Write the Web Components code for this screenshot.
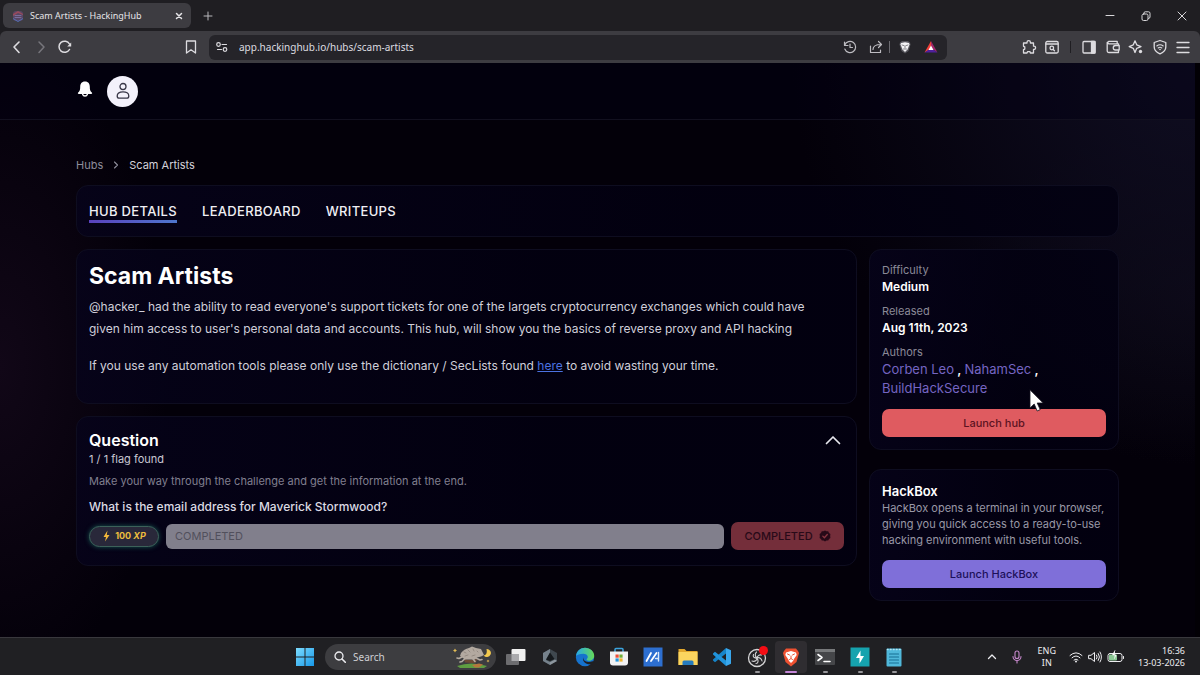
<!DOCTYPE html>
<html lang="en">
<head>
<meta charset="utf-8">
<meta name="viewport" content="width=device-width, initial-scale=1">
<title>Scam Artists - HackingHub</title>
<style>
  html { height: 100%; background: #020009; }
  body { margin: 0; min-height: 100%; display: flex; flex-direction: column; font-family: Inter, sans-serif; font-size: 13px; color: #fff; }
  hub-page { flex: 1; }
</style>
</head>
<body>
<window-tabs></window-tabs>
<window-toolbar></window-toolbar>
<hub-page>
  <site-header slot="header"></site-header>
  <crumb-trail></crumb-trail>
  <hub-tabs></hub-tabs>
  <hub-columns>
    <hub-intro></hub-intro>
    <hub-question></hub-question>
    <hub-facts slot="side"></hub-facts>
    <hack-box slot="side"></hack-box>
  </hub-columns>
</hub-page>
<task-bar></task-bar>

<script>
const base = `
  :host, *, *::before, *::after { box-sizing: border-box; }
  button { font: inherit; color: inherit; background: none; border: 0; padding: 0; margin: 0; display: inline-flex; align-items: center; justify-content: center; }
  h1, h2, p, dl, dd, ol { margin: 0; padding: 0; }
  a { color: inherit; text-decoration: none; }
  svg { display: block; fill: none; stroke-linecap: round; stroke-linejoin: round; flex: none; }
  svg:not([stroke]) { stroke: currentColor; }
  svg:not([stroke-width]) { stroke-width: 1.3; }
`;
function define(name, css, html) {
  const template = document.createElement('template');
  template.innerHTML = `<style>${base}${css}</style>${html}`;
  customElements.define(name, class extends HTMLElement {
    constructor() {
      super();
      this.attachShadow({ mode: 'open' }).append(template.content.cloneNode(true));
    }
  });
}

define('window-tabs', `
  :host { display: flex; height: 31px; background: #1f1e22; padding: 3px 12px 0 3px; align-items: flex-start; color: #e6e5e8; font: 9px/14px "Noto Sans", sans-serif; }
  .tab { display: flex; align-items: center; width: 188px; height: 25px; border-radius: 6px; background: #3d3c41; padding: 0 8px 0 9px; gap: 6px; }
  .tab span { flex: 1; white-space: nowrap; }
  .add { width: 34px; height: 25px; color: #b9b8bc; }
  .controls { margin-left: auto; display: flex; gap: 24px; height: 25px; align-items: center; color: #d8d7da; }
  .controls svg { stroke-width: 1; }
`, `
  <div class="tab">
    <svg width="12" height="12" viewBox="0 0 12 12" stroke="none"><rect x="1" y="1" width="10" height="10" rx="3" fill="#584664"/><path d="M1 4 6 1l5 3v1L6 3 1 6z" fill="#984a5c"/><path d="M1 8l5 3 5-3v1l-5 3-5-3z" fill="#5270b8"/><path d="M3 5.500h6M3 7.500h6" stroke="#7a6d9c" stroke-width="1"/></svg>
    <span>Scam Artists - HackingHub</span>
    <button aria-label="Close tab"><svg width="8" height="8" viewBox="0 0 8 8" stroke-width="1.500"><path d="M1.500 1.500l5 5m0-5l-5 5"/></svg></button>
  </div>
  <button class="add" aria-label="New tab"><svg width="10" height="10" viewBox="0 0 10 10" stroke-width="1"><path d="M5 1v8M1 5h8"/></svg></button>
  <div class="controls">
    <button aria-label="Minimize"><svg width="12" height="12" viewBox="0 0 12 12"><path d="M2 5.500h8"/></svg></button>
    <button aria-label="Restore"><svg width="12" height="12" viewBox="0 0 12 12"><rect x="2" y="4" width="6" height="6.500" rx="1.500"/><path d="M4 3.500V3q0-1.200 1.200-1.200H8.500Q10 1.800 10 3.300V7q0 1.500-1.500 1.500"/></svg></button>
    <button aria-label="Close"><svg width="12" height="12" viewBox="0 0 12 12"><path d="M2 2l8 8M10 2l-8 8"/></svg></button>
  </div>
`);

define('window-toolbar', `
  :host { display: block; background: #1f1e22; color: #dddce0; font: 10px/16px "Noto Sans", sans-serif; }
  .bar { display: flex; align-items: center; height: 32px; background: #3d3c41; border-radius: 6px 6px 0 0; padding: 0 9px; }
  .nav { display: flex; gap: 8px; width: 64px; }
  .dim { color: #77767c; }
  .mark { margin-left: 110px; }
  .url { flex: 1; min-width: 0; display: flex; align-items: center; height: 25px; margin-left: 10px; border-radius: 6px; background: #252429; padding: 0 8px 0 5px; }
  .url input { flex: 1; min-width: 0; background: none; border: 0; padding: 0; margin-left: 9px; color: #dddce0; font: inherit; outline: 0; }
  .tools { display: flex; align-items: center; gap: 10px; }
  .tools i { width: 1px; height: 12px; background: #6b6a70; margin: 0 -3px 0 -5px; }
  .tools button { color: #bdbcc1; }
  .brave { margin-left: 74px; display: flex; gap: 7px; }
  .split { width: 1px; height: 12px; background: #1f1e22; margin: 0 10px; }
  .side { display: flex; width: 110px; justify-content: space-between; }
`, `
  <div class="bar">
    <div class="nav">
      <button aria-label="Back"><svg width="16" height="16" viewBox="0 0 16 16" stroke-width="1.600"><path d="M10 3L5 8l5 5.500"/></svg></button>
      <button class="dim" aria-label="Forward"><svg width="16" height="16" viewBox="0 0 16 16" stroke-width="1.500"><path d="M6 3l5 5-5 5.500"/></svg></button>
      <button aria-label="Reload"><svg width="16" height="16" viewBox="0 0 16 16" stroke-width="1.500"><path d="M12.500 5A5.600 5.600 0 1 0 12.500 10.500"/><path d="M14.200 3.500v4H10.200z" fill="currentColor" stroke="none"/></svg></button>
    </div>
    <button class="mark" aria-label="Bookmark"><svg width="16" height="16" viewBox="0 0 16 16"><path d="M3.500 2h9v12L8 10.800 3.500 14z"/></svg></button>
    <div class="url">
      <button aria-label="Site settings"><svg width="16" height="16" viewBox="0 0 16 16" stroke-width="1.200"><circle cx="4.500" cy="5.500" r="1.800"/><path d="M8 5.500h4.500M3.500 10.500h4"/><circle cx="11" cy="10.500" r="1.800"/></svg></button>
      <input aria-label="Address" value="app.hackinghub.io/hubs/scam-artists">
      <div class="tools">
        <button aria-label="History"><svg width="16" height="16" viewBox="0 0 16 16" stroke-width="1.200"><path d="M2.800 6A5.600 5.600 0 1 1 2.800 10M2.500 3v3.500H6M8 5v3.500h2.500"/></svg></button>
        <button aria-label="Share"><svg width="16" height="16" viewBox="0 0 16 16" stroke-width="1.200"><path d="M2.500 7v6.500h10V11M5 10.500c0-4 3-5 8-5M10.500 2.500l3 3-3 3"/></svg></button>
        <i></i>
        <button aria-label="Shields"><svg width="16" height="16" viewBox="0 0 16 16" stroke="none"><path d="M3 3.500L5 2h6l2 1.500.5 2L11.500 12 8 14.500 4.500 12 2.500 5.500z" fill="#57565d"/><path d="M4 4l4-.8L12 4l.5 1.500-2 5L8 13l-2.500-2.500-2-5z" fill="#f4f3f6"/><path d="M5 6l2 .6M11 6l-2 .6M8 7v2M6.500 10h3" stroke="#77767c" stroke-width=".9"/></svg></button>
        <button aria-label="Rewards"><svg width="16" height="16" viewBox="0 0 16 16" stroke="none"><path d="M8 2L1.500 13.500 8 10z" fill="#f04038"/><path d="M8 2l6.500 11.500L8 9z" fill="#a22769"/><path d="M1.500 13.500h13L8 9z" fill="#50209c"/><path d="M8 6.500l2.500 4.500h-5z" fill="#fff"/></svg></button>
      </div>
    </div>
    <div class="brave">
      <button aria-label="Extensions"><svg width="16" height="16" viewBox="0 0 16 16"><path d="M2.500 4H6V3.300a1.700 1.700 0 0 1 3.400 0V4h3.100v3.200h.5a1.600 1.600 0 0 1 0 3.200h-.5V14H9.400l-.4-1.300H6.500L6 14H2.500v-3.300l1.300-.6V7.900l-1.300-.6z"/></svg></button>
      <button aria-label="Find in page"><svg width="16" height="16" viewBox="0 0 16 16"><rect x="1.800" y="2.500" width="12.400" height="11.500" rx="1.500"/><path d="M2 5h12"/><circle cx="7.800" cy="9" r="1.800"/><path d="M9.200 10.500l1.300 1.300"/></svg></button>
    </div>
    <div class="split"></div>
    <div class="side">
      <button aria-label="Sidebar"><svg width="16" height="16" viewBox="0 0 16 16"><rect x="2" y="2.500" width="12" height="11.500" rx="1"/><path d="M10.500 2.500H14V14h-3.500z" fill="currentColor"/></svg></button>
      <button aria-label="Wallet"><svg width="16" height="16" viewBox="0 0 16 16"><path d="M13.500 6V4.800H3.800a1.300 1.300 0 0 1 0-2.500h8.400v2.500M2.200 3.500V12q0 1.500 1.500 1.500h9.800v-2"/><path d="M14.200 6.500H10.500a2.200 2.200 0 0 0 0 4.500h3.700z"/></svg></button>
      <button aria-label="Leo"><svg width="16" height="16" viewBox="0 0 16 16"><path d="M7 1.800l1.700 4L13 7.600 8.700 9.300 7 13.500 5.300 9.300 1.200 7.600l4.100-1.800z"/><circle cx="12.500" cy="12.500" r="1.700" fill="currentColor" stroke="none"/></svg></button>
      <button aria-label="VPN"><svg width="16" height="16" viewBox="0 0 16 16"><path d="M8 1.500l5.800 2V8c0 3-2.500 5.500-5.800 6.800C4.700 13.500 2.200 11 2.200 8V3.500z"/><path d="M4.800 7q3.200-2.500 6.400 0M6.200 9q1.800-1.400 3.600 0" stroke-width="1.100"/><circle cx="8" cy="10.500" r=".8" fill="currentColor" stroke="none"/></svg></button>
      <button aria-label="Menu"><svg width="16" height="16" viewBox="0 0 16 16"><path d="M2 3.500h12M2 8.500h12M2 13.500h12"/></svg></button>
    </div>
  </div>
`);

define('hub-page', `
  :host { display: block; padding-right: 5px; background:
      linear-gradient(90deg, transparent calc(100% - 5px), #020005 calc(100% - 5px)),
      radial-gradient(ellipse 14% 56% at 0 53%, #110717, #11071700),
      radial-gradient(ellipse 34% 70% at 100% 0, #100e22, #100e2200),
      radial-gradient(ellipse 20% 30% at 100% 40%, #0a0712, #0a071200),
      #030009; }
  main { padding: 36px 76px; }
`, `<slot name="header"></slot><main><slot></slot></main>`);

define('site-header', `
  :host { display: flex; align-items: center; gap: 13px; height: 57px; padding: 0 76px; border-bottom: 1px solid #12101f; background: #02001466; }
  button:last-child { width: 31px; height: 31px; border-radius: 50%; background: #f3f1fb; color: #393748; }
`, `
  <button aria-label="Notifications"><svg width="18" height="20" viewBox="0 1 18 20" stroke="none"><path d="M9 1.500C5.500 1.500 4.200 4 4.200 6.800c0 3-.4 4.500-2 5.700-.7.700-.3 1.500.6 1.500h12.400c.9 0 1.300-.8.6-1.500-1.600-1.200-2-2.700-2-5.700C13.800 4 12.500 1.500 9 1.500z" fill="#fff"/><path d="M6.600 14.200a2.500 2.500 0 0 0 4.800 0" stroke="#fff" stroke-width="1.300"/></svg></button>
  <button aria-label="Account"><svg width="16" height="18" viewBox="0 0 16 18"><circle cx="8" cy="4.500" r="3"/><path d="M2.200 14c0-3 2.500-4.200 5.800-4.200s5.800 1.200 5.800 4.200c0 1.500-.8 2.200-2 2.200H4.200c-1.200 0-2-.7-2-2.200z"/></svg></button>
`);

define('crumb-trail', `
  :host { display: block; font-size: 11px; line-height: 18px; color: #8e8d9b; margin-bottom: 11px; }
  ol { display: flex; align-items: center; list-style: none; gap: 10px; }
  [aria-current] { color: #d3d2da; }
`, `
  <nav aria-label="Breadcrumb"><ol>
    <li><a href="#hubs">Hubs</a></li>
    <li aria-hidden="true"><svg width="6" height="8" viewBox="0 0 6 8" stroke-width="1.100"><path d="M1.500 1L4.500 4l-3 3"/></svg></li>
    <li aria-current="page">Scam Artists</li>
  </ol></nav>
`);

define('glass-card', `
  :host { display: block; border: 1px solid #0e0d20; border-radius: 12px; padding: 12px; background: linear-gradient(90deg, #06031bcc, #020011cc 60%); }
`, `<slot></slot>`);

define('hub-tabs', `
  :host { display: block; margin-bottom: 12px; }
  nav { display: flex; gap: 25px; height: 26px; align-items: center; font-size: 13px; line-height: 18px; font-weight: 500; letter-spacing: 0.025em; color: #f0eff4; }
  a { border-bottom: 3px solid transparent; margin-top: 3px; }
  a[aria-current] { border-image: linear-gradient(90deg, #5a41bd, #4e77cd) 1; }
`, `<glass-card><nav aria-label="Hub sections">
  <a href="#details" aria-current="page">HUB DETAILS</a><a href="#leaderboard">LEADERBOARD</a><a href="#writeups">WRITEUPS</a>
</nav></glass-card>`);

define('hub-columns', `
  :host { display: grid; grid-template-columns: minmax(0, 1fr) 250px; gap: 12px; align-items: start; }
  section { display: grid; gap: 12px; }
  aside { display: grid; gap: 19px; }
`, `<section><slot></slot></section><aside><slot name="side"></slot></aside>`);

define('hub-intro', `
  :host { display: block; }
  h1 { font-size: 23px; line-height: 28px; font-weight: 700; margin-bottom: 6px; }
  p { max-width: 740px; font-size: 12px; line-height: 22px; color: #d0cfda; }
  p + p { margin: 15px 0 14px; }
  a { color: #4b72e0; text-decoration: underline; }
`, `<glass-card>
  <h1>Scam Artists</h1>
  <p>@hacker_ had the ability to read everyone's support tickets for one of the largets cryptocurrency exchanges which could have given him access to user's personal data and accounts. This hub, will show you the basics of reverse proxy and API hacking</p>
  <p>If you use any automation tools please only use the dictionary / SecLists found <a href="#seclists">here</a> to avoid wasting your time.</p>
</glass-card>`);

define('hub-question', `
  :host { display: block; }
  header { display: flex; justify-content: space-between; align-items: center; line-height: 22px; }
  header button { width: 22px; height: 22px; color: #e8e7ee; }
  h2 { font-size: 16px; line-height: 22px; font-weight: 600; }
  .found { font-size: 11px; line-height: 16px; color: #c9c8d3; }
  .hint { font-size: 11px; line-height: 16px; color: #807f8f; margin-top: 6px; }
  label { display: block; font-size: 12px; line-height: 18px; font-weight: 500; color: #dbdae3; margin-top: 9px; }
  form { display: flex; align-items: center; gap: 7px; margin: 6px 0 3px; }
  .xp { display: flex; align-items: center; justify-content: center; gap: 4px; width: 70px; height: 21px; border-radius: 11px; border: 1px solid #3c6159; background: #29283a; box-shadow: 0 0 5px #17544f; color: #edbd3e; font-size: 9px; line-height: 14px; font-weight: 700; }
  input { flex: 1; min-width: 0; height: 25px; border: 0; border-radius: 6px; background: #817f8c; padding: 0 9px; font: 11px/16px Inter, sans-serif; color: #51505c; }
  input::placeholder { color: #51505c; opacity: 1; }
  .done { width: 113px; height: 28px; border-radius: 7px; background: #742e3a; color: #280a18; font-size: 11px; line-height: 16px; font-weight: 500; gap: 6px; }
`, `<glass-card>
  <header><h2>Question</h2><button aria-label="Collapse question"><svg width="16" height="16" viewBox="0 0 16 16" stroke-width="1.700"><path d="M1.500 11.500L8 5l6.500 6.500"/></svg></button></header>
  <p class="found">1 / 1 flag found</p>
  <p class="hint">Make your way through the challenge and get the information at the end.</p>
  <label for="answer">What is the email address for Maverick Stormwood?</label>
  <form>
    <span class="xp"><svg width="9" height="12" viewBox="0 0 9 12" stroke="none"><path d="M5.500.5L1.500 7H4l-1 4.500L7.500 5H4.800z" fill="#f4b83a"/></svg><span>100 <em>XP</em></span></span>
    <input id="answer" placeholder="COMPLETED" disabled>
    <button class="done" type="button" disabled>COMPLETED<svg width="12" height="12" viewBox="0 0 12 12" stroke="none"><path d="M6 .5l1.500.8 1.700 0 .8 1.600 1.400 1L11.200 6l.2 1.900-1.400 1-.8 1.600-1.700.1L6 11.500l-1.500-.9-1.700-.1L2 8.900.6 7.900.8 6 .6 3.900l1.400-1 .8-1.600 1.700 0z" fill="#280a18"/><path d="M3.800 6.100l1.600 1.600 2.900-3.200" stroke="#8a3541" stroke-width="1.300"/></svg></button>
  </form>
</glass-card>`);

define('wide-button', `
  :host { display: block; }
  button { width: 100%; height: 28px; border-radius: 7px; background: var(--fill); color: var(--ink); font: 500 11px/16px Inter, sans-serif; }
`, `<button type="button"><slot></slot></button>`);

define('hub-facts', `
  :host { display: block; position: relative; }
  dt { font-size: 11px; line-height: 16px; color: #8b8a98; }
  dd { font-size: 12px; line-height: 18px; font-weight: 600; margin-bottom: 7px; }
  dd.authors { font-size: 13px; line-height: 19px; margin-bottom: 11px; }
  dd a { color: #7565c2; font-weight: 400; }
  wide-button { --fill: #df5b60; --ink: #5c1220; }
  .pointer { position: absolute; left: 160px; top: 140px; }
`, `<glass-card>
  <dl>
    <dt>Difficulty</dt><dd>Medium</dd>
    <dt>Released</dt><dd>Aug 11th, 2023</dd>
    <dt>Authors</dt><dd class="authors"><a href="#corben">Corben Leo</a> , <a href="#nahamsec">NahamSec</a> ,<br><a href="#buildhacksecure">BuildHackSecure</a></dd>
  </dl>
  <wide-button>Launch hub</wide-button>
</glass-card>
<svg class="pointer" width="16" height="24" viewBox="0 0 16 24" stroke="none" aria-hidden="true"><path d="M1 1v18l4.200-4 3 7 3-1.400-3-6.600H14z" fill="#fff" stroke="#15131f" stroke-width=".8"/></svg>`);

define('hack-box', `
  :host { display: block; }
  h2 { font-size: 13px; line-height: 18px; font-weight: 600; }
  p { font-size: 11px; line-height: 16px; color: #9998a6; margin-bottom: 12px; }
  wide-button { --fill: #7f6fd9; --ink: #1d1059; }
`, `<glass-card>
  <h2>HackBox</h2>
  <p>HackBox opens a terminal in your browser, giving you quick access to a ready-to-use hacking environment with useful tools.</p>
  <wide-button>Launch HackBox</wide-button>
</glass-card>`);

define('task-icon', `
  :host { display: block; }
  button { width: 20px; height: 32px; position: relative; }
  :host([open]) button::after { content: ""; position: absolute; bottom: 0; left: 8px; width: 5px; height: 2px; border-radius: 1px; background: #97969a; }
  :host([active]) button { width: 32px; margin: 0 -6px; background: #2f2d31; border-radius: 4px; }
  :host([active]) button::after { content: ""; position: absolute; bottom: 0; left: 10px; width: 12px; height: 2px; border-radius: 1px; background: #c486d8; }
`, `<button><slot></slot></button>`);

define('task-bar', `
  :host { display: grid; grid-template-columns: 1fr auto 1fr; align-items: center; height: 38px; background: #202023; border-top: 1px solid #39383d; color: #ededf0; font: 9px/12px "Noto Sans", sans-serif; }
  .apps { grid-column: 2; display: flex; align-items: center; }
  .search { display: flex; align-items: center; width: 171px; height: 26px; border-radius: 13px; background: #3d3d40; padding: 0 3px 0 9px; margin: 0 10px 0 11px; gap: 7px; font-size: 10px; }
  .search input { flex: 1; min-width: 0; background: none; border: 0; padding: 0; font: inherit; color: #cfcfd3; }
  .search input::placeholder { color: #cfcfd3; opacity: 1; }
  .icons { display: flex; width: 398px; justify-content: space-between; }
  .tray { display: flex; align-items: center; justify-content: flex-end; padding-right: 15px; }
  .tray button + button { margin-left: 12px; }
  .lang { text-align: center; margin: 0 13px 0 14px; }
  .status { display: flex; gap: 5px; }
  .clock { text-align: right; margin-left: 13px; }
`, `
  <div class="apps">
    <button aria-label="Start"><svg width="18" height="18" viewBox="0 0 18 18" stroke="none"><defs><linearGradient id="w" x2="1" y2="1"><stop stop-color="#7ddcff"/><stop offset="1" stop-color="#1798e8"/></linearGradient></defs><path d="M0 0h8.500v8.500H0zM9.500 0H18v8.500H9.500zM0 9.500h8.500V18H0zM9.500 9.500H18V18H9.500z" fill="url(#w)"/></svg></button>
    <div class="search">
      <svg width="12" height="12" viewBox="0 0 12 12"><circle cx="5" cy="5" r="4"/><path d="M8 8l3.300 3.300" stroke-width="1.600"/></svg>
      <input type="search" aria-label="Search" placeholder="Search">
      <svg width="40" height="24" viewBox="0 0 40 24" stroke="none">
        <path d="M4 21q14-5 30 0l-3 2H7z" fill="#5f9d42"/><path d="M19 20l7-1.500 4 1-4 3h-4z" fill="#b7773c"/>
        <path d="M11 14q6 2 13 0l-1 3.500-4 .5-7-.5z" fill="#6e4a35"/>
        <path d="M8 8q3-4 8-5l3-1.500 4 1.500 5 1 1.500 3 1.500 3-3 1.500-4 1-2 2H12l-2-1.500-3-2z" fill="#b3a9a0"/>
        <path d="M9 12l-3 1.500-2-.5M12 13.500l-3 3-2 .5M23 13l4 2 2-.5M20 14l2 2.500" stroke="#b3a9a0" stroke-width="1.600"/>
        <path d="M11 7l2 1m2-3l2 2m3-3l1 2m3 0l1 1M12 11l3-1m4 1l3-1" stroke="#8d837a" stroke-width=".8"/>
        <path d="M33.500 4a4 4 0 1 1-2.800 6.400q4-.6 2.800-6.400z" fill="#f3c94e"/><path d="M2 3.500l.7 1.300 1.300.7-1.300.7L2 7.500l-.7-1.300L0 5.500l1.300-.7zM35 14.500l.5 1 1 .5-1 .5-.5 1-.5-1-1-.5 1-.5z" fill="#e4bd54"/>
      </svg>
    </div>
    <div class="icons">
      <task-icon aria-label="Task view"><svg width="20" height="18" viewBox="0 0 20 18" stroke="none"><rect x="5.500" y="1" width="14" height="12" rx="1" fill="#f0f0f0"/><rect x="0" y="6" width="13" height="11" rx="1" fill="#6c6c6f"/><path d="M5.500 6H13v7H5.500z" fill="#aaaaad"/></svg></task-icon>
      <task-icon aria-label="Armoury"><svg width="18" height="18" viewBox="0 0 18 18" stroke="none"><path d="M9 1l7 4v8l-7 4-7-4V5z" fill="#3f484f"/><path d="M9 1L2 5v8l7 4v-3l-4-2 4-7z" fill="#76828c"/><path d="M9 4.500l4.500 6.500L9 13l-4-1.500z" fill="#15191d"/><path d="M9 14l5-2.500 2 1.500-7 4z" fill="#8d969e"/></svg></task-icon>
      <task-icon aria-label="Edge"><svg width="20" height="20" viewBox="0 0 20 20" stroke="none"><defs><linearGradient id="e" x2="1"><stop stop-color="#26a8e8"/><stop offset="1" stop-color="#66d957"/></linearGradient></defs><circle cx="10" cy="10" r="9.200" fill="#1673ce"/><path d="M1 9C1.500 4 5.500.8 10 .8c5.500 0 9.200 4 9.200 8 0 3.500-2.800 5-5.200 5-2 0-3-1-2-2 2-2 0-5-3.500-5C4.500 6.800 2 8 1 9z" fill="url(#e)"/><path d="M8.500 9.200c-1.500 3.500 2.500 7.300 9.200 5l1.800 1-2.500 2c-6 1-10.700-3-8.500-8z" fill="#202023"/></svg></task-icon>
      <task-icon aria-label="Store"><svg width="20" height="20" viewBox="0 0 20 20" stroke="none"><path d="M6 5V2.500q0-1 1-1h6q1 0 1 1V5" stroke="#3ba4df" stroke-width="1.500"/><path d="M1 4.500h18v11q0 3-3 3H4q-3 0-3-3z" fill="#f2f2f3"/><path d="M6.500 7.500h3.200v3.200H6.500z" fill="#ef4f37"/><path d="M10.400 7.500h3.200v3.200h-3.200z" fill="#70af38"/><path d="M6.500 11.400h3.200v3.200H6.500z" fill="#2596dc"/><path d="M10.400 11.400h3.200v3.200h-3.200z" fill="#efb42f"/></svg></task-icon>
      <task-icon aria-label="MyASUS"><svg width="20" height="20" viewBox="0 0 20 20" stroke="none"><path d="M.5.5h19v19H.5z" fill="#2d6fd0"/><path d="M3.500 14l4.500-8M8 14l5.500-8" stroke="#fff" stroke-width="1.800"/><path d="M15.500 5.500V14M12.500 11.500h3" stroke="#d7e8fb" stroke-width="1.400"/></svg></task-icon>
      <task-icon aria-label="File Explorer"><svg width="20" height="18" viewBox="0 0 20 18" stroke="none"><path d="M.5 1h6l2 2h11v14H.5z" fill="#e3a82d"/><path d="M.5 4h19v13H.5z" fill="#fbd55f"/><path d="M4.500 17v-3q0-1.500 1.500-1.500h8q1.500 0 1.500 1.500v3z" fill="#267bbd"/></svg></task-icon>
      <task-icon aria-label="Code"><svg width="20" height="20" viewBox="0 0 20 20" stroke="none"><path d="M14 1l5 2.200v13.600L14 19z" fill="#39a7ec"/><path d="M14 1v5.500L3 15.200l-2-1.700v-1z" fill="#1684c9"/><path d="M14 19v-5.500L3 4.800 1 6.500v1z" fill="#2193da"/></svg></task-icon>
      <task-icon open aria-label="OBS"><svg width="22" height="22" viewBox="0 0 22 22" stroke="none"><circle cx="11" cy="12" r="8.500" fill="#252427" stroke="#d4d4d5" stroke-width="1.300"/><path d="M10.500 6c-2 2-1.500 4.500.5 6M11 12c2.500-1 4.500.5 5 3M11 12c0 2.500-2 4-5 3M7.500 8.500c-1 2 .5 4 3.500 3.500M15.500 9c-2-.5-4 .5-4.500 3M10 17.500c2 0 3-2.500 1-5.500" stroke="#d4d4d5" stroke-width="1.100"/><circle cx="17.500" cy="4.500" r="4.500" fill="#f50d14"/></svg></task-icon>
      <task-icon active aria-label="Brave"><svg width="18" height="20" viewBox="0 0 18 20" stroke="none"><path d="M4 1.500h10l2 2.500 1 2-2.500 9L9 19.500 3.500 15 1 6l1-2z" fill="#ee5131"/><path d="M4 5.500L9 4l5 1.500.7 2.500-2.700 4-1 2L9 16l-2-2-1-2-2.700-4z" fill="#fff"/><path d="M5.500 7l2 1M12.500 7l-2 1M9 9v2M7.500 12.500l1.500-1 1.500 1" stroke="#ee5131" stroke-width="1"/></svg></task-icon>
      <task-icon open aria-label="Terminal"><svg width="20" height="16" viewBox="0 0 20 16" stroke="none"><rect width="20" height="16" rx="1" fill="#454649"/><path d="M0 0h20v3H0z" fill="#77797b"/><path d="M3 5.500l4 3-4 3M9 12.500h6" stroke="#fff" stroke-width="1.600"/></svg></task-icon>
      <task-icon open aria-label="Burp Suite"><svg width="20" height="20" viewBox="0 0 20 20" stroke="none"><path d="M.5.5h19v19H.5z" fill="#16a3ae"/><path d="M10.500 3.500v5.500H14l-4.500 7.500V11H6z" fill="#fff"/></svg></task-icon>
      <task-icon open aria-label="Notepad"><svg width="18" height="20" viewBox="0 0 18 20" stroke="none"><rect x="1.500" y="1.500" width="15" height="18" rx="1" fill="#50b8da"/><path d="M2.500 2.500h13" stroke="#b5e4f3" stroke-width="1.500" stroke-dasharray=".5 2.500"/><path d="M4.500 7h9M4.500 10h9M4.500 13h9M4.500 16h9" stroke="#176e93" stroke-width="1.200"/></svg></task-icon>
    </div>
  </div>
  <div class="tray">
    <button aria-label="Show hidden icons"><svg width="12" height="12" viewBox="0 0 12 12"><path d="M2.500 7.500L6 4l3.500 3.500"/></svg></button>
    <button aria-label="Microphone"><svg width="14" height="14" viewBox="0 0 14 14" stroke="#c789cd" stroke-width="1.100"><rect x="5" y="1" width="4" height="7.500" rx="2"/><path d="M3 6.500a4 4 0 0 0 8 0M7 10.800V13"/></svg></button>
    <div class="lang">ENG<br>IN</div>
    <div class="status">
      <svg width="14" height="14" viewBox="0 0 14 14" stroke-width="1"><path d="M1 5.500q6-5.500 12 0M3 7.800q4-3.800 8 0M5 10q2-2 4 0"/><circle cx="7" cy="11.500" r="1" fill="currentColor" stroke="none"/></svg>
      <svg width="14" height="14" viewBox="0 0 14 14" stroke-width="1"><path d="M1 5.300h2L6.500 2.500v9L3 8.700H1zM8.500 5q1.500 2 0 4M10.300 3.500q2.500 3.500 0 7M12 2q3 5 0 10"/></svg>
      <svg width="18" height="14" viewBox="0 0 18 14" stroke-width="1"><rect x="1" y="3.500" width="14" height="8" rx="2"/><path d="M16.500 6.500v2"/><rect x="2" y="4.500" width="8" height="6" rx="1" fill="#8bc995" stroke="none"/><path d="M8 .5L5.500 5H9L7.500 8.500" fill="#fff" stroke="#fff" stroke-width=".6"/></svg>
    </div>
    <div class="clock">16:36<br>13-03-2026</div>
  </div>
`);
</script>
</body>
</html>
